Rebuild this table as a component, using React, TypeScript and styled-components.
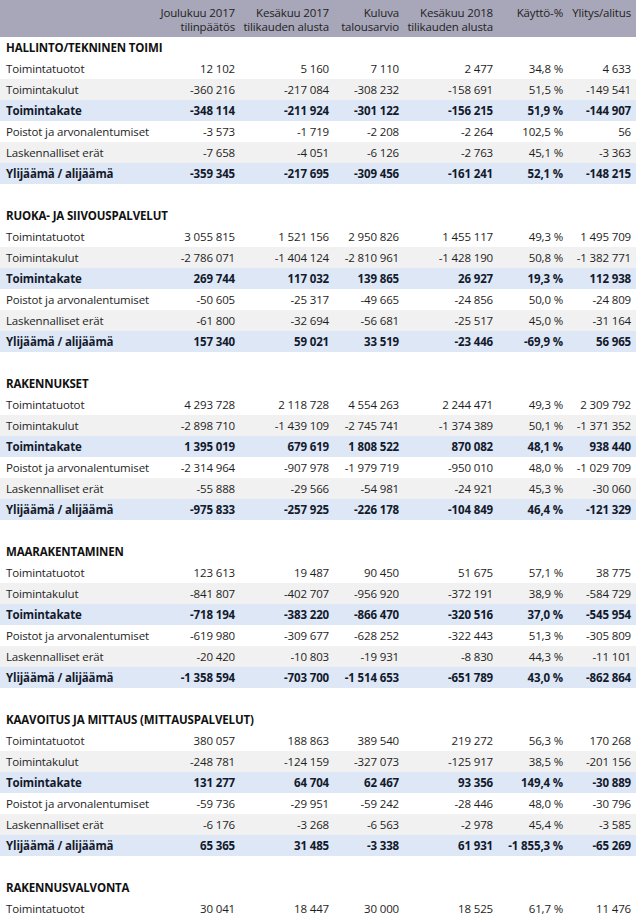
import styled, { createGlobalStyle } from 'styled-components';

const GlobalStyle = createGlobalStyle`
	html, body {
		margin: 0;
		padding: 0;
		background: #fff;
	}
	body {
		font-family: 'Open Sans', 'Noto Sans', sans-serif;
		font-size: 11.5px;
		letter-spacing: -0.15px;
		color: #1e1e1e;
	}
`;

type RowKind = 'plain' | 'shade' | 'total';

const StyledTable = styled.table`
	width: 636px;
	border-collapse: collapse;
	table-layout: fixed;
`;

const HeadRow = styled.tr`
	background: #a8a7b9;
	height: 37px;
`;

const HeadCell = styled.th`
	font-weight: normal;
	text-align: right;
	vertical-align: top;
	padding: 6px 5px 0 0;
	line-height: 14px;
	white-space: nowrap;
	color: #222;
`;

const Row = styled.tr<{ $kind: RowKind }>`
	height: 21px;
	background: ${({ $kind }) =>
		$kind === 'shade' ? '#f1f1f1' : $kind === 'total' ? '#dde7f6' : '#fff'};
	font-weight: ${({ $kind }) => ($kind === 'total' ? 700 : 400)};
	color: ${({ $kind }) => ($kind === 'total' ? '#131a2c' : '#1e1e1e')};
`;

const LabelCell = styled.td`
	padding: 0 0 0 6px;
	white-space: nowrap;
	line-height: 21px;
`;

const NumCell = styled.td`
	padding: 0 5px 0 0;
	text-align: right;
	white-space: nowrap;
	line-height: 21px;
`;

const TitleRow = styled.tr`
	height: 21px;
`;

const SectionTitle = styled.td`
	padding: 1px 0 0 6px;
	font-weight: 700;
	white-space: nowrap;
	line-height: 20px;
	color: #111;
`;

const Spacer = styled.tr`
	height: 21px;
`;

const columns: { w: number; top: string; bottom?: string }[] = [
	{ w: 155, top: '' },
	{ w: 85, top: 'Joulukuu 2017', bottom: 'tilinpäätös' },
	{ w: 94, top: 'Kesäkuu 2017', bottom: 'tilikauden alusta' },
	{ w: 70, top: 'Kuluva', bottom: 'talousarvio' },
	{ w: 94, top: 'Kesäkuu 2018', bottom: 'tilikauden alusta' },
	{ w: 70, top: 'Käyttö-%' },
	{ w: 68, top: 'Ylitys/alitus' },
];

const labels: [string, RowKind][] = [
	['Toimintatuotot', 'plain'],
	['Toimintakulut', 'shade'],
	['Toimintakate', 'total'],
	['Poistot ja arvonalentumiset', 'plain'],
	['Laskennalliset erät', 'shade'],
	['Ylijäämä / alijäämä', 'total'],
];

const sections: { title: string; rows: string[][] }[] = [
	{
		title: 'HALLINTO/TEKNINEN TOIMI',
		rows: [
			['12 102', '5 160', '7 110', '2 477', '34,8 %', '4 633'],
			['-360 216', '-217 084', '-308 232', '-158 691', '51,5 %', '-149 541'],
			['-348 114', '-211 924', '-301 122', '-156 215', '51,9 %', '-144 907'],
			['-3 573', '-1 719', '-2 208', '-2 264', '102,5 %', '56'],
			['-7 658', '-4 051', '-6 126', '-2 763', '45,1 %', '-3 363'],
			['-359 345', '-217 695', '-309 456', '-161 241', '52,1 %', '-148 215'],
		],
	},
	{
		title: 'RUOKA- JA SIIVOUSPALVELUT',
		rows: [
			['3 055 815', '1 521 156', '2 950 826', '1 455 117', '49,3 %', '1 495 709'],
			['-2 786 071', '-1 404 124', '-2 810 961', '-1 428 190', '50,8 %', '-1 382 771'],
			['269 744', '117 032', '139 865', '26 927', '19,3 %', '112 938'],
			['-50 605', '-25 317', '-49 665', '-24 856', '50,0 %', '-24 809'],
			['-61 800', '-32 694', '-56 681', '-25 517', '45,0 %', '-31 164'],
			['157 340', '59 021', '33 519', '-23 446', '-69,9 %', '56 965'],
		],
	},
	{
		title: 'RAKENNUKSET',
		rows: [
			['4 293 728', '2 118 728', '4 554 263', '2 244 471', '49,3 %', '2 309 792'],
			['-2 898 710', '-1 439 109', '-2 745 741', '-1 374 389', '50,1 %', '-1 371 352'],
			['1 395 019', '679 619', '1 808 522', '870 082', '48,1 %', '938 440'],
			['-2 314 964', '-907 978', '-1 979 719', '-950 010', '48,0 %', '-1 029 709'],
			['-55 888', '-29 566', '-54 981', '-24 921', '45,3 %', '-30 060'],
			['-975 833', '-257 925', '-226 178', '-104 849', '46,4 %', '-121 329'],
		],
	},
	{
		title: 'MAARAKENTAMINEN',
		rows: [
			['123 613', '19 487', '90 450', '51 675', '57,1 %', '38 775'],
			['-841 807', '-402 707', '-956 920', '-372 191', '38,9 %', '-584 729'],
			['-718 194', '-383 220', '-866 470', '-320 516', '37,0 %', '-545 954'],
			['-619 980', '-309 677', '-628 252', '-322 443', '51,3 %', '-305 809'],
			['-20 420', '-10 803', '-19 931', '-8 830', '44,3 %', '-11 101'],
			['-1 358 594', '-703 700', '-1 514 653', '-651 789', '43,0 %', '-862 864'],
		],
	},
	{
		title: 'KAAVOITUS JA MITTAUS (MITTAUSPALVELUT)',
		rows: [
			['380 057', '188 863', '389 540', '219 272', '56,3 %', '170 268'],
			['-248 781', '-124 159', '-327 073', '-125 917', '38,5 %', '-201 156'],
			['131 277', '64 704', '62 467', '93 356', '149,4 %', '-30 889'],
			['-59 736', '-29 951', '-59 242', '-28 446', '48,0 %', '-30 796'],
			['-6 176', '-3 268', '-6 563', '-2 978', '45,4 %', '-3 585'],
			['65 365', '31 485', '-3 338', '61 931', '-1 855,3 %', '-65 269'],
		],
	},
	{
		title: 'RAKENNUSVALVONTA',
		rows: [['30 041', '18 447', '30 000', '18 525', '61,7 %', '11 476']],
	},
];

// numbers use a non-breaking space as thousands separator
const nb = (s: string) => s.replace(/ /g, '\u00a0');

export default function App() {
	return (
		<>
			<GlobalStyle />
			<StyledTable>
				<colgroup>
					{columns.map((c, i) => (
						<col key={i} style={{ width: c.w }} />
					))}
				</colgroup>
				<thead>
					<HeadRow>
						{columns.map((c, i) => (
							<HeadCell key={i}>
								{c.top}
								{c.bottom && <br />}
								{c.bottom}
							</HeadCell>
						))}
					</HeadRow>
				</thead>
				{sections.map((s, si) => (
					<tbody key={si}>
						{si > 0 && (
							<Spacer>
								<td colSpan={7} />
							</Spacer>
						)}
						<TitleRow>
							<SectionTitle colSpan={7}>{s.title}</SectionTitle>
						</TitleRow>
						{s.rows.map((r, ri) => (
							<Row key={ri} $kind={labels[ri][1]}>
								<LabelCell>{labels[ri][0]}</LabelCell>
								{r.map((v, vi) => (
									<NumCell key={vi}>{nb(v)}</NumCell>
								))}
							</Row>
						))}
					</tbody>
				))}
			</StyledTable>
		</>
	);
}
